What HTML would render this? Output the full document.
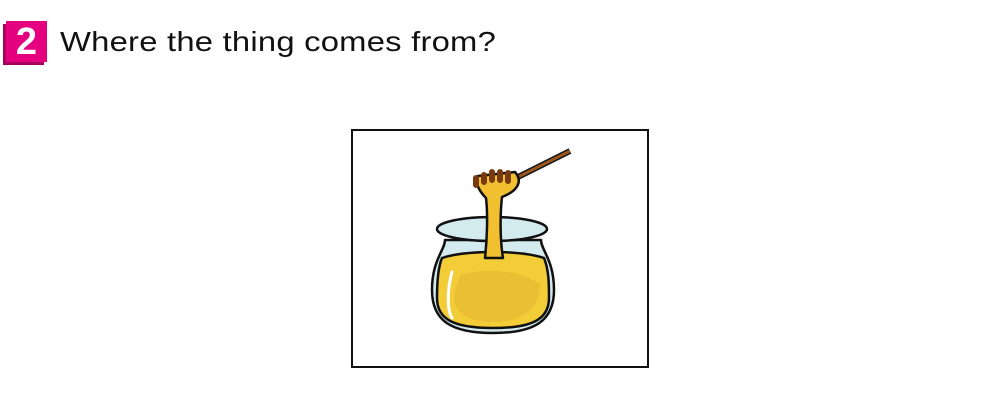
<!DOCTYPE html>
<html><head><style>
body{margin:0;width:1000px;height:400px;background:#fff;position:relative;overflow:hidden;font-family:"Liberation Sans",sans-serif}
.b{position:absolute;left:6px;top:21px;width:41px;height:41px;background:#e4007f;color:#fff;font-weight:bold;font-size:38px;line-height:42px;text-align:center;box-shadow:-3px 3px 0 #a8005c}
.t{position:absolute;left:60px;top:26px;font-size:28px;color:#111;white-space:nowrap;transform-origin:0 0;transform:scaleX(1.17);letter-spacing:0.2px}
.box{position:absolute;left:351px;top:129px;width:294px;height:235px;border:2px solid #111}
</style></head><body>
<div class="b">2</div>
<div class="t">Where the thing comes from?</div>
<div class="box"></div>
<svg width="1000" height="400" style="position:absolute;left:0;top:0">
<g stroke="#111" stroke-width="2.5" stroke-linejoin="round">
<path d="M570 151 L518 177" stroke="#111" stroke-width="6"/>
<path d="M570 151 L518 177" stroke="#9a5520" stroke-width="3"/>
<path d="M445 240 C445 250 432 260 432 290 C432 320 450 333 493 333 C536 333 554 320 554 290 C554 260 541 250 541 240 Z" fill="#d3ebef"/>
<path d="M442 258 C437 270 437 290 437 298 C437 320 455 328 493 328 C531 328 549 320 549 298 C549 285 549 270 544 258 C520 250 466 250 442 258 Z" fill="#f3cd38"/>
<ellipse cx="492" cy="229" rx="55" ry="12" fill="#d3ebef"/>
<path d="M485 258 C487 240 488 215 486 198 C478 190 474 180 478 176 L515 172 C522 180 520 190 502 197 C500 215 500 240 503 258 Z" fill="#f0c030"/>
<path d="M476 178 L476 185 M484 175 L484 182 M492 172 L492 180 M500 172 L500 180 M508 173 L508 181" stroke="#7a3a10" stroke-width="6" stroke-linecap="round"/>
</g>
<path d="M452 272 C447 290 447 310 452 318" stroke="#fff" stroke-width="3" fill="none" stroke-linecap="round"/>
<path d="M460 275 C495 265 530 275 540 285 C540 310 520 322 493 322 C465 322 450 310 455 290 Z" fill="#e5b630" opacity=".6"/>
</svg>
</body></html>
